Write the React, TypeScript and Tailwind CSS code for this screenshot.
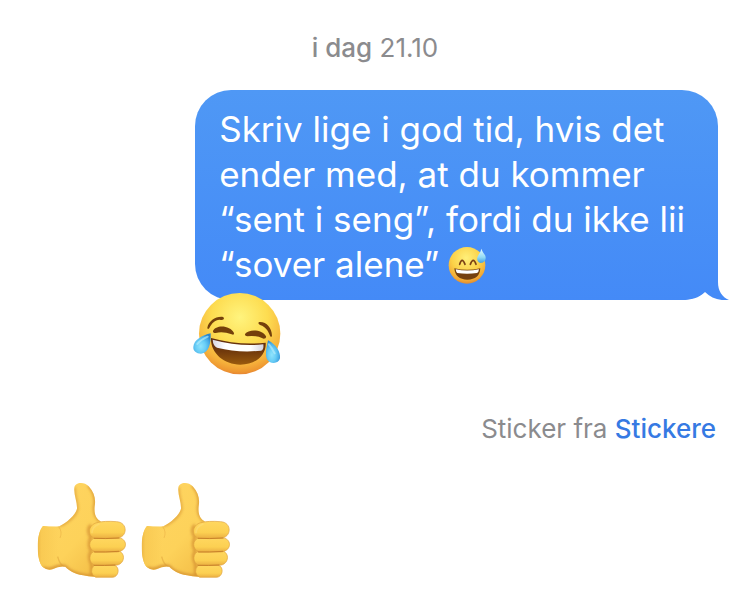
function SweatSmile() {
  return (
    <svg viewBox="18 24 120 120" role="img" aria-label="Grinning face with sweat" className="h-10 w-10">
      <defs>
        <radialGradient id="sweatFace" cx="0.48" cy="0.3" r="0.72">
          <stop offset="0" stopColor="#fff07a" />
          <stop offset="0.55" stopColor="#fbd147" />
          <stop offset="0.85" stopColor="#f2a936" />
          <stop offset="1" stopColor="#dc8530" />
        </radialGradient>
        <linearGradient id="sweatDrop" x1="0" y1="0" x2="0" y2="1">
          <stop offset="0" stopColor="#e4fbff" />
          <stop offset="0.6" stopColor="#93daf5" />
          <stop offset="1" stopColor="#3f9fe4" />
        </linearGradient>
      </defs>
      <circle cx="78" cy="85" r="55" fill="url(#sweatFace)" />
      <path d="M56 82q7-24 16 0M88 82q9-24 17 0" fill="none" stroke="#7b4215" strokeWidth="5" strokeLinecap="round" />
      <path d="M40 94Q78 103 118 94Q116 128 79 128Q43 128 40 94Z" fill="#75400f" />
      <path d="M44 97Q78 104 114 97Q113 107 108 108Q78 113 49 108Q45 105 44 97Z" fill="#fff" />
      <path d="M121 35C125 49 135 52 134 64C133 74 126 78 119 78C111 77 107 70 109 61C111 53 119 48 121 35Z" fill="url(#sweatDrop)" />
    </svg>
  );
}

function TearsOfJoy() {
  return (
    <svg viewBox="36 36 270 252" role="img" aria-label="Face with tears of joy" className="h-[84px] w-[90px]">
      <defs>
        <radialGradient id="joyFace" cx="0.5" cy="0.3" r="0.72">
          <stop offset="0" stopColor="#fff47e" />
          <stop offset="0.48" stopColor="#fddc50" />
          <stop offset="0.8" stopColor="#f6b33c" />
          <stop offset="0.93" stopColor="#ee9731" />
          <stop offset="1" stopColor="#e17a35" />
        </radialGradient>
        <linearGradient id="joyMouth" x1="0" y1="0" x2="0" y2="1">
          <stop offset="0" stopColor="#5f2c0d" />
          <stop offset="0.5" stopColor="#713a0c" />
          <stop offset="1" stopColor="#9a5a0d" />
        </linearGradient>
        <linearGradient id="joyTeeth" x1="0" y1="0" x2="1" y2="0">
          <stop offset="0" stopColor="#d9d8e3" />
          <stop offset="0.25" stopColor="#fff" />
          <stop offset="0.75" stopColor="#fff" />
          <stop offset="1" stopColor="#d5d4df" />
        </linearGradient>
        <radialGradient id="joyTear" cx="0.42" cy="0.64" r="0.65">
          <stop offset="0" stopColor="#8fe3fc" />
          <stop offset="0.45" stopColor="#68cdf6" />
          <stop offset="0.8" stopColor="#45a9e4" />
          <stop offset="1" stopColor="#2a86cf" />
        </radialGradient>
      </defs>
      <circle cx="179" cy="161" r="122" fill="url(#joyFace)" />
      <g fill="#74400b">
        <path d="M82 143C86 123 108 108 129 111Q134 113 131 118Q127 121 119 119C104 120 96 129 88 144Q83 150 82 143Z" />
        <path d="M237 126C259 124 275 142 276 167Q274 174 270 167C264 151 255 140 242 136Q232 131 237 126Z" />
        <path d="M99 153C107 133 151 135 162 159Q163 166 155 163Q128 153 107 159Q98 159 99 153Z" />
        <path d="M195 162C206 146 248 148 258 169Q260 176 251 176Q226 165 202 169Q194 168 195 162Z" />
      </g>
      <path d="M93 174Q178 197 257 188C260 221 231 254 181 254C131 254 91 218 93 174Z" fill="url(#joyMouth)" />
      <path d="M98 179Q178 201 250 193Q252 209 243 212Q174 219 111 203Q99 197 98 179Z" fill="url(#joyTeeth)" />
      <path d="M92 160C67 166 41 180 40 201C39 213 49 221 63 221C87 219 93 190 92 160Z" fill="url(#joyTear)" />
      <path d="M264 181C290 195 302 216 300 235C297 248 282 252 269 246C252 237 258 209 264 181Z" fill="url(#joyTear)" />
      <path d="M83 170Q61 180 52 192M267 193Q278 207 284 220" fill="none" stroke="#b7edfb" strokeWidth="6" strokeLinecap="round" opacity="0.65" />
    </svg>
  );
}

function ThumbsUp() {
  return (
    <svg viewBox="36 36 270 291" role="img" aria-label="Thumbs up" className="h-[97px] w-[90px]">
      <defs>
        <linearGradient id="thumbHand" x1="0" y1="0" x2="0.8" y2="1">
          <stop offset="0" stopColor="#ffd563" />
          <stop offset="0.65" stopColor="#fdd25a" />
          <stop offset="1" stopColor="#f3bd46" />
        </linearGradient>
        <linearGradient id="thumbFinger" x1="0" y1="0" x2="0" y2="1">
          <stop offset="0" stopColor="#ffd75f" />
          <stop offset="0.65" stopColor="#fcd052" />
          <stop offset="1" stopColor="#ebaf42" />
        </linearGradient>
        <linearGradient id="thumbWrist" x1="0" y1="0" x2="1" y2="0">
          <stop offset="0" stopColor="#eab343" />
          <stop offset="0.2" stopColor="#f9ca53" />
          <stop offset="1" stopColor="#f9ca53" stopOpacity="0" />
        </linearGradient>
        <filter id="thumbShade" x="-40%" y="-40%" width="180%" height="180%">
          <feGaussianBlur stdDeviation="5" />
        </filter>
        <clipPath id="thumbOutline">
          <path d="M54 168Q86 171 103 169C125 158 151 135 156 116C157 96 146 75 148 54C149 36 178 34 191 49C208 68 213 87 209 109C207 127 211 146 226 153L243 180L231 318Q202 323 174 316C148 311 132 302 121 290Q103 287 82 298Q67 302 53 291C34 273 32 191 54 168Z" />
        </clipPath>
      </defs>
      <g clipPath="url(#thumbOutline)">
        <path d="M30 30H250V330H30Z" fill="url(#thumbHand)" />
        <path d="M36 160H100V305H36Z" fill="url(#thumbWrist)" />
        <g fill="none" stroke="#d69230" filter="url(#thumbShade)">
          <path d="M101 168C118 163 152 142 157 117C158 94 145 76 149 52" strokeWidth="5" />
          <path d="M190 46C214 71 212 94 208 112Q207 140 227 155" strokeWidth="7" />
          <path d="M54 293Q67 301 84 295Q105 284 121 290C139 312 176 319 216 318" strokeWidth="9" />
          <path d="M198 165Q183 180 198 202Q187 222 199 242Q188 261 200 284V315" strokeWidth="8" />
        </g>
        <path d="M101 170Q113 186 105 204" fill="none" stroke="#e1a03c" strokeWidth="3" opacity="0.4" />
        <path d="M98 260Q104 285 121 293" fill="none" stroke="#d89935" strokeWidth="4" opacity="0.45" />
      </g>
      <g fill="url(#thumbFinger)" stroke="#e0a23d" strokeWidth="2">
        <path d="M207 286H265C285 286 284 320 263 322H212Q190 308 207 286Z" />
        <path d="M211 243H276C303 243 302 284 272 286H209C189 278 190 248 211 243Z" />
        <path d="M211 203H276C310 203 310 243 276 246H211C189 238 188 210 211 203Z" />
        <path d="M216 158Q238 152 275 155C310 157 308 203 275 205H210C187 200 187 165 216 158Z" />
      </g>
      <path d="M208 205Q240 207 282 204M208 246Q240 247 281 244M207 286Q238 287 270 285" fill="none" stroke="#c9832b" strokeWidth="3" strokeLinecap="round" />
      <path d="M222 162Q202 170 201 188" fill="none" stroke="#ffe184" strokeWidth="5" strokeLinecap="round" opacity="0.4" />
    </svg>
  );
}

export default function App() {
  return (
    <main className="bg-white pb-7 font-['Inter','Liberation_Sans',sans-serif]">
      <p className="pt-8 text-center text-[26px] leading-8 text-[#8b8b8e]">
        <time>
          <span className="font-medium">i dag</span> 21.10
        </time>
      </p>

      <section className="mt-[26px] mr-8 flex justify-end">
        <div className="relative rounded-[36px] bg-linear-to-b from-[#4f98f5] to-[#448af7] pt-[17px] pr-[33px] pb-[13px] pl-6 text-white">
          <p className="text-[35px] leading-[45px]">
            Skriv lige i god tid, hvis det
            <br />
            ender med, at du kommer
            <br />
            “sent i seng”, fordi du ikke lii
            <br />
            <span className="flex items-center gap-2">
              “sover alene” <SweatSmile />
            </span>
          </p>
          <svg viewBox="0 0 48 40" aria-hidden="true" className="absolute -right-3 bottom-0 h-10 w-12">
            <defs>
              <linearGradient id="tailFill" x1="0" y1="0" x2="0" y2="1">
                <stop offset="0" stopColor="#468df7" />
                <stop offset="1" stopColor="#448af7" />
              </linearGradient>
            </defs>
            <path d="M0 0H36V22C36 31 40 37 47 40C37 41 29 38 23 32C17 38 9 40 0 40Z" fill="url(#tailFill)" />
          </svg>
          <div className="absolute top-[202px] -left-[3px]">
            <TearsOfJoy />
          </div>
        </div>
      </section>

      <p className="mt-[113px] mr-[34px] text-right text-[26px] leading-8 text-[#8b8b8e]">
        Sticker fra <a href="#stickere" className="font-medium text-[#367ae3]">Stickere</a>
      </p>

      <section className="mt-[37px] ml-[37px] flex gap-3.5">
        <ThumbsUp />
        <ThumbsUp />
      </section>
    </main>
  );
}
